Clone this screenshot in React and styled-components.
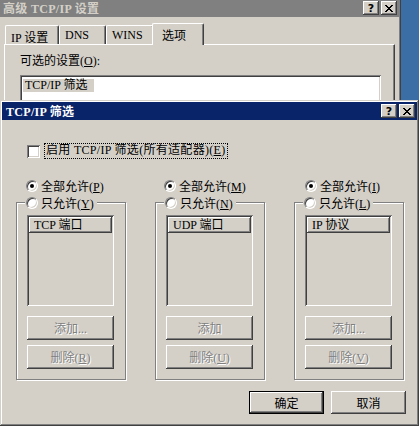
import React from 'react';
import styled, { createGlobalStyle } from 'styled-components';

const GlobalStyle = createGlobalStyle`
	html, body {
		margin: 0;
		padding: 0;
		background: #3a6ea5;
		overflow: hidden;
	}
	* {
		box-sizing: border-box;
	}
`;

const FONT = `"Liberation Serif", "Noto Sans CJK SC", sans-serif`;

const raised = `
	box-shadow: inset -1px -1px #404040, inset 1px 1px #ffffff, inset -2px -2px #808080, inset 2px 2px #d4d0c8;
`;

const sunken = `
	box-shadow: inset 1px 1px #808080, inset -1px -1px #ffffff, inset 2px 2px #404040, inset -2px -2px #d4d0c8;
`;

const Desktop = styled.div`
	position: relative;
	width: 419px;
	height: 426px;
	overflow: hidden;
	background: #3a6ea5;
	font-family: ${FONT};
	font-size: 12px;
	color: #000;
`;

const Window = styled.div`
	position: absolute;
	left: ${({ $left }) => $left}px;
	top: ${({ $top }) => $top}px;
	width: ${({ $width }) => $width}px;
	height: ${({ $height }) => $height}px;
	padding: 2px;
	display: flex;
	flex-direction: column;
	background: #d4d0c8;
	box-shadow: inset -1px -1px #404040, inset 1px 1px #d4d0c8, inset -2px -2px #808080, inset 2px 2px #ffffff;
`;

const TitleBar = styled.div`
	height: 18px;
	flex: none;
	display: flex;
	align-items: center;
	padding: 0 2px 0 4px;
	background: ${({ $active }) => ($active ? '#0a246a' : '#808080')};
	color: ${({ $active }) => ($active ? '#ffffff' : '#d4d0c8')};
	font-weight: bold;
	font-size: 12px;
	letter-spacing: 0.3px;
`;

const TitleText = styled.div`
	flex: 1;
	white-space: nowrap;
`;

const CaptionButton = styled.div`
	width: 16px;
	height: 14px;
	display: flex;
	align-items: center;
	justify-content: center;
	background: #d4d0c8;
	color: #000;
	font-family: "DejaVu Sans", sans-serif;
	font-weight: bold;
	font-size: 11px;
	margin-left: ${({ $gap }) => $gap || 0}px;
	${raised}
`;

const CloseGlyph = () => (
	<svg width="8" height="7" viewBox="0 0 8 7" shapeRendering="crispEdges">
		<path d="M0 0h2v1H0zM6 0h2v1H6zM1 1h2v1H1zM5 1h2v1H5zM2 2h4v1H2zM3 3h2v1H3zM2 4h4v1H2zM1 5h2v1H1zM5 5h2v1H5zM0 6h2v1H0zM6 6h2v1H6z" fill="#000" />
	</svg>
);

const Caption = ({ title, active }) => (
	<TitleBar $active={active}>
		<TitleText>{title}</TitleText>
		<CaptionButton>?</CaptionButton>
		<CaptionButton $gap={2}>
			<CloseGlyph />
		</CaptionButton>
	</TitleBar>
);

/* background window */

const BackBody = styled.div`
	flex: 1;
	padding: 6px 4px 0 5px;
	display: flex;
	flex-direction: column;
`;

const TabRow = styled.div`
	display: flex;
	align-items: flex-end;
	height: 21px;
	padding-left: 1px;
	position: relative;
	z-index: 1;
`;

const Tab = styled.div`
	width: ${({ $w }) => $w}px;
	height: ${({ $selected }) => ($selected ? 22 : 19)}px;
	margin: ${({ $selected }) => ($selected ? '0 -2px -1px -2px' : '0')};
	padding: ${({ $selected }) => ($selected ? '2px 0 0 9px' : '2px 0 0 5px')};
	background: #d4d0c8;
	border-top: 1px solid #ffffff;
	border-left: 1px solid #ffffff;
	border-right: 1px solid #404040;
	box-shadow: inset -1px 0 #808080;
	border-radius: 2px 2px 0 0;
	white-space: nowrap;
`;

const TabPanel = styled.div`
	flex: 1;
	padding: 9px 13px 0 15px;
	border-top: 1px solid #ffffff;
	border-left: 1px solid #ffffff;
	border-right: 1px solid #404040;
	box-shadow: inset -1px 0 #808080;
`;

const FieldLabel = styled.div`
	height: 14px;
	line-height: 14px;
	margin-bottom: 7px;
`;

const WhiteList = styled.div`
	height: 60px;
	background: #ffffff;
	padding: 3px;
	${sunken}
`;

const ListItem = styled.div`
	display: inline-block;
	height: 13px;
	line-height: 13px;
	padding: 0 6px 0 2px;
	background: #d4d0c8;
`;

/* front dialog */

const DialogBody = styled.div`
	flex: 1;
	display: flex;
	flex-direction: column;
	padding: 23px 13px 0 14px;
`;

const CheckRow = styled.label`
	display: flex;
	align-items: center;
	margin-left: 11px;
	height: 16px;
`;

const CheckBox = styled.span`
	width: 13px;
	height: 13px;
	flex: none;
	background: #ffffff;
	${sunken}
`;

const FocusText = styled.span`
	margin-left: 4px;
	padding: 0 2px;
	height: 16px;
	line-height: 15px;
	letter-spacing: 0.3px;
	outline: 1px dotted #000;
	outline-offset: -1px;
	white-space: nowrap;
`;

const Columns = styled.div`
	display: grid;
	grid-template-columns: repeat(3, 110px);
	column-gap: 29px;
	margin-top: 18px;
`;

const Column = styled.div`
	display: flex;
	flex-direction: column;
`;

const RadioRow = styled.div`
	display: flex;
	align-items: center;
	height: 17px;
	padding-left: ${({ $inset }) => $inset}px;
	padding-right: 3px;
	background: #d4d0c8;
	white-space: nowrap;
`;

const Legend = styled(RadioRow)`
	align-self: flex-start;
	margin: -9px 0 0 -2px;
	padding-left: 1px;
`;

const RadioCircle = styled.span`
	width: 12px;
	height: 12px;
	flex: none;
	border-radius: 50%;
	background: #ffffff;
	border: 1px solid;
	border-color: #808080 #ffffff #ffffff #808080;
	box-shadow: inset 1px 1px #404040, inset -1px -1px #d4d0c8;
	display: flex;
	align-items: center;
	justify-content: center;
	margin-right: 3px;

	&::after {
		content: '';
		width: 4px;
		height: 4px;
		border-radius: 50%;
		background: #000;
		display: ${({ $checked }) => ($checked ? 'block' : 'none')};
	}
`;

const Accel = styled.u`
	text-decoration: underline;
`;

const Label = ({ text, accel }) => (
	<span>
		{text}(<Accel>{accel}</Accel>)
	</span>
);

const GroupBox = styled.div`
	margin-top: 8px;
	display: flex;
	flex-direction: column;
	padding: 0 11px 10px 10px;
	border: 1px solid #808080;
	box-shadow: inset 1px 1px #ffffff, 1px 1px #ffffff;
	height: 178px;
`;

const PortList = styled.div`
	margin-top: 4px;
	height: 91px;
	padding: 2px;
	background: #d4d0c8;
	${sunken}
`;

const ListHeader = styled.div`
	height: 16px;
	line-height: 16px;
	padding-left: 5px;
	background: #d4d0c8;
	white-space: nowrap;
	${raised}
`;

const PushButton = styled.div`
	height: ${({ $h }) => $h || 24}px;
	width: ${({ $w }) => ($w ? `${$w}px` : 'auto')};
	margin-top: ${({ $mt }) => $mt || 0}px;
	display: flex;
	align-items: center;
	justify-content: center;
	background: #d4d0c8;
	color: ${({ $disabled }) => ($disabled ? '#808080' : '#000')};
	text-shadow: ${({ $disabled }) => ($disabled ? '1px 1px #ffffff' : 'none')};
	border: ${({ $default }) => ($default ? '1px solid #000' : 'none')};
	white-space: nowrap;
	${raised}
`;

const Footer = styled.div`
	display: flex;
	justify-content: flex-end;
	gap: 7px;
	margin: 11px -2px 0 0;
`;

const filters = [
	{ all: 'P', only: 'Y', header: 'TCP 端口', add: '添加...', remove: 'R', inset: 10 },
	{ all: 'M', only: 'N', header: 'UDP 端口', add: '添加', remove: 'U', inset: 9 },
	{ all: 'I', only: 'L', header: 'IP 协议', add: '添加...', remove: 'V', inset: 11 },
];

const FilterColumn = ({ item }) => (
	<Column>
		<RadioRow $inset={item.inset}>
			<RadioCircle $checked />
			<Label text="全部允许" accel={item.all} />
		</RadioRow>
		<GroupBox>
			<Legend>
				<RadioCircle />
				<Label text="只允许" accel={item.only} />
			</Legend>
			<PortList>
				<ListHeader>{item.header}</ListHeader>
			</PortList>
			<PushButton $disabled $mt={10}>
				{item.add}
			</PushButton>
			<PushButton $disabled $mt={5}>
				<Label text="删除" accel={item.remove} />
			</PushButton>
		</GroupBox>
	</Column>
);

const App = () => (
	<Desktop>
		<GlobalStyle />
		<Window $left={-3} $top={-3} $width={404} $height={200}>
			<Caption title="高级 TCP/IP 设置" />
			<BackBody>
				<TabRow>
					<Tab $w={54}>IP 设置</Tab>
					<Tab $w={47}>DNS</Tab>
					<Tab $w={48}>WINS</Tab>
					<Tab $w={52} $selected>
						选项
					</Tab>
				</TabRow>
				<TabPanel>
					<FieldLabel>
						<Label text="可选的设置" accel="O" />:
					</FieldLabel>
					<WhiteList>
						<ListItem>TCP/IP 筛选</ListItem>
					</WhiteList>
				</TabPanel>
			</BackBody>
		</Window>

		<Window $left={0} $top={100} $width={419} $height={326}>
			<Caption title="TCP/IP 筛选" active />
			<DialogBody>
				<CheckRow>
					<CheckBox />
					<FocusText>
						启用 TCP/IP 筛选(所有适配器)(<Accel>E</Accel>)
					</FocusText>
				</CheckRow>
				<Columns>
					{filters.map((item) => (
						<FilterColumn key={item.header} item={item} />
					))}
				</Columns>
				<Footer>
					<PushButton $default $w={75} $h={23}>
						确定
					</PushButton>
					<PushButton $w={75} $h={23}>
						取消
					</PushButton>
				</Footer>
			</DialogBody>
		</Window>
	</Desktop>
);

export default App;
